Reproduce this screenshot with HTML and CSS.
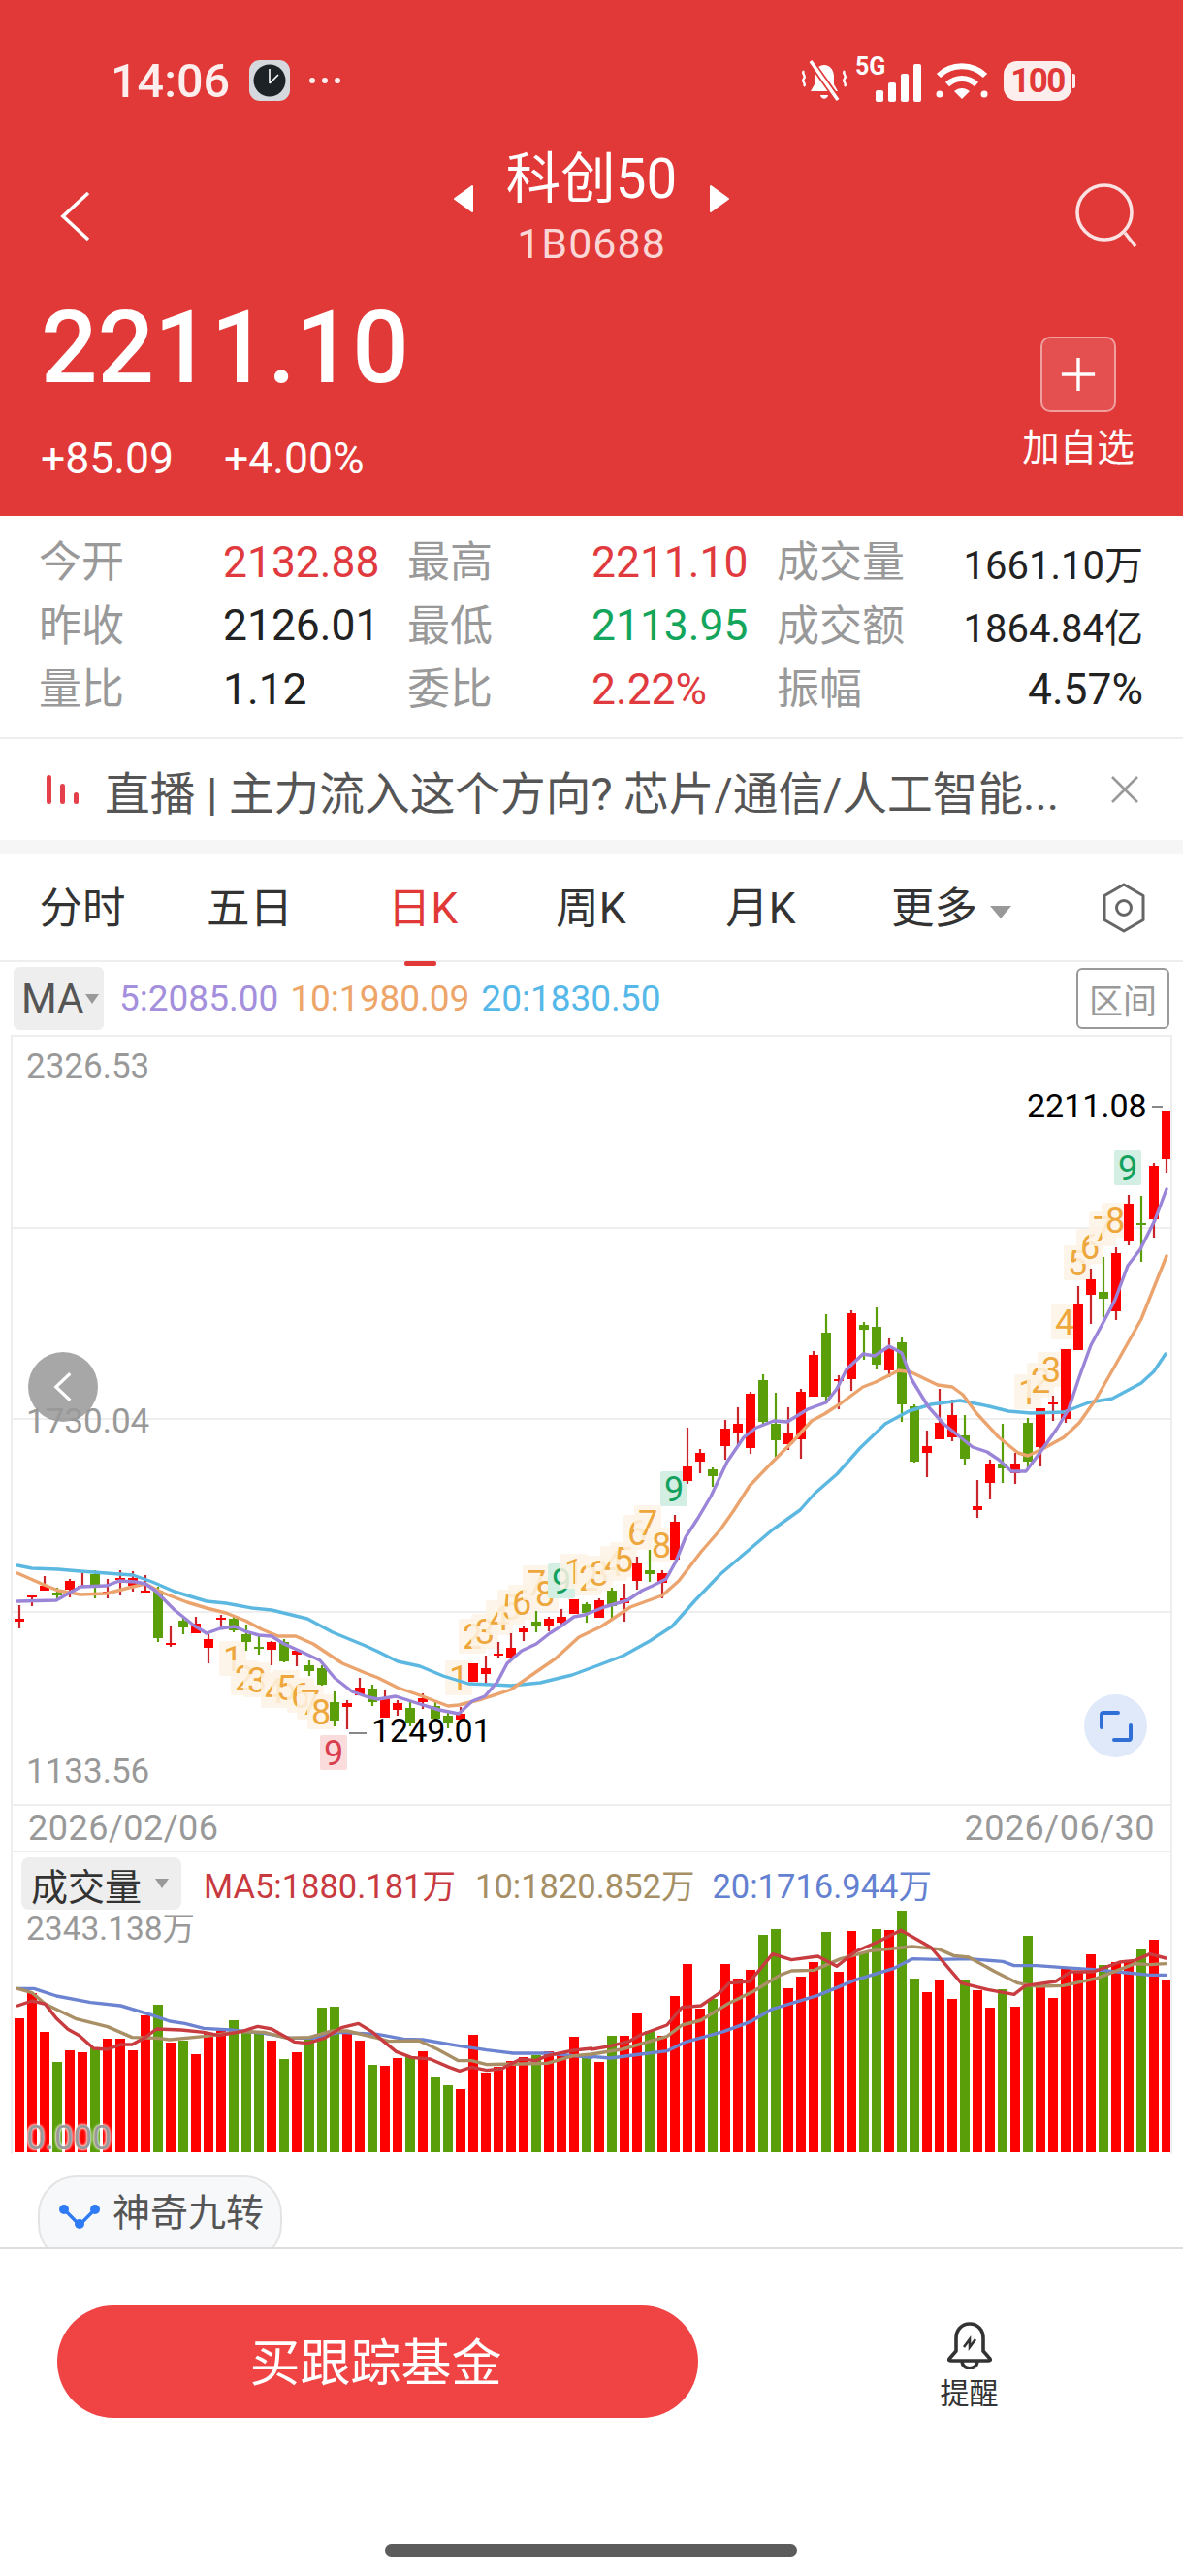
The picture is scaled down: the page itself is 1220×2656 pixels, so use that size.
FILE: index.html
```html
<!DOCTYPE html>
<html lang="zh">
<head>
<meta charset="utf-8">
<title>科创50</title>
<link rel="stylesheet" href="styles.css">
</head>
<body>
<div class="page">
  <header class="header">
    <div class="status">
      <span class="time">14:06</span>
      <svg class="clock" viewBox="0 0 42 42"><rect width="42" height="42" rx="11" fill="#d5d9dd"/><circle cx="21" cy="21" r="16.5" fill="#1d2226"/><path d="M21 24V9M21 24l9-9" stroke="#fff" stroke-width="1.6" fill="none"/></svg>
      <span class="dots"><i></i><i></i><i></i></span>
      <span class="status-right">
        <svg class="st-bell" viewBox="0 0 50 44"><path d="M25 6c6 0 10 5 10 12v8l4 7H11l4-7v-8c0-7 4-12 10-12z" fill="#fff"/><path d="M21 37c1 5 7 5 8 0z" fill="#fff"/><path d="M10 1l30 42" stroke="#e13838" stroke-width="7"/><path d="M11 2l28 40" stroke="#fff" stroke-width="3.5"/><path d="M4 12c-3 3 3 5 0 8s3 5 0 8M46 12c-3 3 3 5 0 8s3 5 0 8" stroke="#fff" stroke-width="2.4" fill="none"/></svg>
        <span class="st-signal"><b class="fiveg">5G</b>
          <svg viewBox="0 0 48 39"><rect x="0" y="27" width="8" height="12" rx="2" fill="#fff"/><rect x="13" y="19" width="8" height="20" rx="2" fill="#fff"/><rect x="26" y="10" width="8" height="29" rx="2" fill="#fff"/><rect x="39" y="0" width="8" height="39" rx="2" fill="#fff"/></svg>
        </span>
        <svg class="st-wifi" viewBox="0 0 54 39"><path d="M3 14C16 1 38 1 51 14" stroke="#fff" stroke-width="6" fill="none"/><path d="M12 23c9-8 21-8 30 0" stroke="#fff" stroke-width="6" fill="none"/><path d="M27 38l-8-8c5-4 11-4 16 0z" fill="#fff"/><circle cx="4" cy="33" r="3.500" fill="#fff"/><circle cx="50" cy="33" r="3.500" fill="#fff"/></svg>
        <span class="battery"><span class="battery-num">100</span></span>
      </span>
    </div>
    <nav class="nav">
      <svg class="back" viewBox="0 0 34 54"><path d="M30 3L4 27l26 24" fill="none" stroke="#fff" stroke-width="3.6"/></svg>
      <div class="title-wrap">
        <svg class="tri" viewBox="0 0 22 30"><path d="M20 2v26L2 15z" fill="#fff" stroke="#fff" stroke-width="2" stroke-linejoin="round"/></svg>
        <div class="title-text">
          <div class="title">科创50</div>
          <div class="code">1B0688</div>
        </div>
        <svg class="tri" viewBox="0 0 22 30"><path d="M2 2v26l18-13z" fill="#fff" stroke="#fff" stroke-width="2" stroke-linejoin="round"/></svg>
      </div>
      <svg class="search" viewBox="0 0 66 68"><circle cx="31" cy="31" r="28" fill="none" stroke="#fff" stroke-opacity=".85" stroke-width="3.6"/><path d="M52 52l11 14" stroke="#fff" stroke-opacity=".85" stroke-width="3.6"/></svg>
    </nav>
    <div class="quote">
      <div>
        <div class="price">2211.10</div>
        <div class="change"><span>+85.09</span><span>+4.00%</span></div>
      </div>
      <div class="add">
        <div class="add-btn"><svg viewBox="0 0 40 40"><path d="M20 2v36M2 20h36" stroke="#fff" stroke-width="3.6"/></svg></div>
        <div class="add-label">加自选</div>
      </div>
    </div>
  </header>

  <section class="stats">
    <span class="k">今开</span><span class="up">2132.88</span><span class="k">最高</span><span class="up">2211.10</span><span class="k">成交量</span><span class="v unit">1661.10万</span>
    <span class="k">昨收</span><span>2126.01</span><span class="k">最低</span><span class="down">2113.95</span><span class="k">成交额</span><span class="v unit">1864.84亿</span>
    <span class="k">量比</span><span>1.12</span><span class="k">委比</span><span class="up">2.22%</span><span class="k">振幅</span><span class="v">4.57%</span>
  </section>

  <section class="news">
    <svg class="news-icon" viewBox="0 0 34 30"><rect x="0" y="0" width="5" height="30" rx="2.5" fill="#e5404a"/><rect x="14" y="9" width="5" height="21" rx="2.5" fill="#e5404a"/><rect x="28" y="18" width="5" height="12" rx="2.5" fill="#e5404a"/></svg>
    <span class="news-text">直播 | 主力流入这个方向? 芯片/通信/人工智能...</span>
    <svg class="news-close" viewBox="0 0 30 28"><path d="M2 1l26 26M28 1L2 27" stroke="#999" stroke-width="2.6"/></svg>
  </section>

  <div class="gap"></div>

  <section class="tabs">
    <span class="tab">分时</span>
    <span class="tab">五日</span>
    <span class="tab active">日K</span>
    <span class="tab">周K</span>
    <span class="tab">月K</span>
    <span class="tab more">更多<i class="caret caret-lg"></i></span>
    <svg class="gear" viewBox="0 0 48 52"><path d="M24 2l20 11.500v25L24 50 4 38.500v-25z" fill="none" stroke="#666" stroke-width="3" stroke-linejoin="round"/><circle cx="24" cy="26" r="7.500" fill="none" stroke="#666" stroke-width="3"/></svg>
  </section>

  <section class="ma-row">
    <span class="ma-box">MA<i class="caret"></i></span>
    <span class="ma5">5:2085.00</span>
    <span class="ma10">10:1980.09</span>
    <span class="ma20">20:1830.50</span>
    <span class="range">区间</span>
  </section>

  <section class="kline">
    <svg id="kline" class="chart-svg" viewBox="13 1069 1194 789"></svg>
    <span class="axis ax-top">2326.53</span>
    <span class="fold"><svg viewBox="0 0 24 36"><path d="M20 3L4 18l16 15" fill="none" stroke="#fff" stroke-width="3.4"/></svg></span>
    <span class="axis ax-mid">1730.04</span>
    <span class="axis ax-low">1133.56</span>
    <span class="peak peak-high">2211.08</span><i class="tick tick-high"></i>
    <span class="peak peak-low">1249.01</span><i class="tick tick-low"></i>
    <span class="expand"><svg viewBox="0 0 36 32"><path d="M3 17V4q0-2 2-2h15M33 15v13q0 2-2 2H16" fill="none" stroke="#2f6fd6" stroke-width="4" stroke-linecap="round"/></svg></span>
  </section>

  <section class="dates"><span>2026/02/06</span><span>2026/06/30</span></section>

  <section class="volume">
    <svg id="volume" class="vol-svg" viewBox="13 1912 1194 309"></svg>
    <div class="vol-head">
      <span class="vol-box">成交量<i class="caret"></i></span>
      <span class="vma5">MA5:1880.181万</span>
      <span class="vma10">10:1820.852万</span>
      <span class="vma20">20:1716.944万</span>
    </div>
    <span class="axis ax-vol">2343.138万</span>
    <span class="axis ax-zero">0.000</span>
  </section>

  <section class="chips">
    <span class="chip">
      <svg viewBox="0 0 42 26"><path d="M5 6l16 16L37 6" fill="none" stroke="#2f7bf5" stroke-width="3.4"/><circle cx="5" cy="6" r="5" fill="#2f7bf5"/><circle cx="37" cy="6" r="5" fill="#2f7bf5"/><circle cx="21" cy="21" r="5" fill="#2f7bf5"/></svg>
      神奇九转
    </span>
  </section>

  <footer class="footer">
    <div class="actions">
      <div class="buy">买跟踪基金</div>
      <div class="remind">
        <svg viewBox="0 0 50 50"><path d="M25 3c-9 0-14 7-14 15v13l-7 8q-1 2 2 2h38q3 0 2-2l-7-8V18c0-8-5-15-14-15z" fill="none" stroke="#333" stroke-width="3.6" stroke-linejoin="round"/><path d="M17 42c1 9 15 9 16 0" fill="none" stroke="#333" stroke-width="3.6"/><path d="M19 27l6-8v8l6-8" fill="none" stroke="#333" stroke-width="2.6"/></svg>
        <span>提醒</span>
      </div>
    </div>
    <div class="home"></div>
  </footer>
</div>
<script src="chart.js"></script>
</body>
</html>
```
FILE: styles.css
```css
* { box-sizing: border-box; }
html, body { margin: 0; padding: 0; background: #fff; }
body { font-family: Roboto, "Noto Sans CJK SC", sans-serif; color: #222; }
i { display: inline-block; font-style: normal; }
.page { width: 1220px; height: 2656px; overflow: hidden; display: flex; flex-direction: column; }

/* header */
.header { height: 532px; background: #e13838; color: #fff; flex: none; }
.status { height: 166px; padding: 0 111px 0 114px; display: flex; align-items: center; }
.time { font-size: 48.500px; font-weight: 500; color: #fdeeee; }
.clock { width: 42px; height: 42px; margin-left: 20px; }
.dots { display: flex; gap: 7px; margin-left: 20px; }
.dots i { width: 6px; height: 6px; border-radius: 50%; background: #fdeeee; }
.status-right { margin-left: auto; display: flex; align-items: center; }
.st-bell { width: 50px; height: 44px; }
.st-signal { position: relative; width: 66px; height: 44px; margin-left: 10px; display: block; }
.st-signal svg { position: absolute; left: 18px; top: 5px; width: 48px; height: 39px; }
.fiveg { position: absolute; left: -3px; top: -7px; font-size: 25px; font-weight: 700; color: #fff; }
.st-wifi { width: 54px; height: 39px; margin-left: 14px; }
.battery { width: 70px; height: 41px; margin-left: 16px; margin-right: 4px; border-radius: 14px; background: #fdeeee; display: flex; align-items: center; justify-content: center; position: relative; }
.battery::after { content: ""; position: absolute; right: -4px; top: 13px; width: 3px; height: 15px; border-radius: 0 2px 2px 0; background: #fdeeee; }
.battery-num { font-size: 35px; font-weight: 700; color: #e13838; letter-spacing: -1.500px; }
.nav { height: 124px; position: relative; display: flex; justify-content: center; padding-left: 0; }
.back { position: absolute; left: 61px; top: 30px; width: 34px; height: 54px; }
.search { position: absolute; left: 1108px; top: 22px; width: 66px; height: 68px; }
.title-wrap { display: flex; align-items: flex-start; }
.tri { width: 22px; height: 30px; margin-top: 24px; }
.title-text { width: 242px; text-align: center; }
.title { font-size: 56.500px; line-height: 60px; margin-top: -11px; }
.code { font-size: 43px; line-height: 50px; margin-top: 11px; color: #fbd6d6; letter-spacing: 1px; }
.quote { height: 242px; padding: 0 50px 0 42px; display: flex; justify-content: space-between; }
.price { font-size: 103px; font-weight: 500; line-height: 110px; margin-top: 14px; }
.change { display: flex; gap: 52px; font-size: 44.500px; line-height: 50px; margin-top: 34px; }
.add { width: 116px; margin-top: 57px; text-align: center; }
.add-btn { width: 78px; height: 78px; margin: 0 auto; border-radius: 10px; background: rgba(255,255,255,.12); border: 2px solid rgba(255,255,255,.45); display: flex; align-items: center; justify-content: center; }
.add-btn svg { width: 38px; height: 38px; }
.add-label { font-size: 38.500px; line-height: 46px; margin-top: 14px; }

/* stats */
.stats { flex: none; height: 230px; padding: 15px 41px 0 40px; border-bottom: 2px solid #eeeeee; display: grid; grid-template-columns: 190px 190px 190px 191px 1fr auto; grid-auto-rows: 65.500px; align-items: center; font-size: 44.400px; }
.stats .k { color: #999; font-size: 44px; margin-top: -7px; }
.stats .up { color: #e03a3e; }
.stats .down { color: #14a55c; }
.stats .v { text-align: right; }
.stats .unit { font-size: 40px; }

/* news */
.news { flex: none; height: 104px; padding: 0 45px 0 48px; display: flex; align-items: center; }
.news-icon { width: 34px; height: 30px; }
.news-text { margin-left: 26px; font-size: 46.700px; color: #555; white-space: nowrap; }
.news-close { width: 30px; height: 28px; margin-left: auto; }
.gap { flex: none; height: 15px; background: #f6f6f6; }

/* tabs */
.tabs { flex: none; height: 111px; padding-bottom: 6px; border-bottom: 2px solid #eeeeee; display: grid; grid-template-columns: 170px 175px 182px 165px 185px 1fr auto; align-items: center; font-size: 44.500px; color: #333; padding-right: 37px; position: relative; }
.tab { text-align: center; position: relative; }
.tab.active { color: #e13838; }
.tab.active::after { content: ""; position: absolute; left: 72px; width: 33px; height: 5px; bottom: -31px; border-radius: 2px; background: #e13838; }
.tab.more { text-align: left; padding-left: 42px; }
.caret { width: 0; height: 0; border-left: 7px solid transparent; border-right: 7px solid transparent; border-top: 10px solid #999; vertical-align: middle; margin-left: 5px; }
.caret-lg { border-left-width: 11px; border-right-width: 11px; border-top-width: 13px; margin-left: 13px; }
.gear { width: 48px; height: 52px; margin-top: 6px; }

/* MA row */
.ma-row { flex: none; height: 75px; position: relative; display: flex; align-items: center; padding-left: 14px; font-size: 37px; }
.ma-box { width: 93px; height: 65px; border-radius: 6px; background: #eee; color: #555; font-size: 42px; display: flex; align-items: center; padding-left: 8px; }
.ma-box .caret { margin-left: 2px; }
.ma5 { color: #a48fdc; margin-left: 16px; }
.ma10 { color: #eda56a; margin-left: 12px; }
.ma20 { color: #55b8e8; margin-left: 12px; }
.range { margin-left: auto; margin-right: 14px; width: 96px; height: 63px; border: 2px solid #999; border-radius: 6px; color: #999; font-size: 35px; display: flex; align-items: center; justify-content: center; }

/* k-line */
.kline { flex: none; height: 793px; margin: 0 11px; border: 2px solid #eeeeee; border-bottom: 0; position: relative; }
.chart-svg { display: block; width: 1194px; height: 789px; position: absolute; left: 0; top: 0; }
.axis { position: absolute; left: 14px; font-size: 35px; line-height: 34px; color: #999; }
.ax-top { top: 14px; }
.ax-mid { top: 380px; }
.ax-low { top: 741px; }
.fold { position: absolute; left: 16px; top: 325px; width: 72px; height: 72px; border-radius: 50%; background: rgba(130,130,130,.7); display: flex; align-items: center; justify-content: center; }
.fold svg { width: 22px; height: 34px; }
.peak { position: absolute; font-size: 34px; line-height: 34px; color: #000; }
.peak-high { left: 1046px; top: 54px; }
.peak-low { left: 370px; top: 698px; }
.tick { position: absolute; height: 2px; background: #888; }
.tick-high { left: 1175px; top: 71px; width: 11px; }
.tick-low { left: 347px; top: 717px; width: 18px; }
.expand { position: absolute; left: 1105px; top: 678px; width: 65px; height: 65px; border-radius: 50%; background: #dfe9fa; display: flex; align-items: center; justify-content: center; }
.expand svg { width: 36px; height: 32px; }

.dates { flex: none; height: 50px; margin: 0 11px; padding: 0 16px 0 16px; border: 2px solid #eeeeee; display: flex; align-items: center; justify-content: space-between; font-size: 36px; color: #999; letter-spacing: .5px; }

/* volume */
.volume { flex: none; height: 311px; margin: 0 11px; border-left: 2px solid #eeeeee; border-right: 2px solid #eeeeee; position: relative; }
.vol-svg { display: block; width: 1194px; height: 309px; position: absolute; left: 0; top: 0; }
.vol-head { position: absolute; left: 9px; top: 5px; height: 54px; display: flex; align-items: center; font-size: 34.500px; }
.vol-box { width: 165px; height: 54px; border-radius: 8px; background: #eee; color: #333; font-size: 38px; padding-left: 10px; display: flex; align-items: center; }
.vol-box .caret { margin-left: 14px; }
.vma5 { color: #c83a40; margin-left: 23px; }
.vma10 { color: #a68f64; margin-left: 20px; }
.vma20 { color: #6480d0; margin-left: 18px; }
.ax-vol { top: 62px; font-size: 33.500px; }
.ax-zero { top: 278px; text-shadow: 0 0 3px #fff, 0 0 3px #fff; }

/* chip */
.chips { flex: none; height: 96px; overflow: hidden; padding: 22px 0 0 39px; }
.chip { width: 252px; height: 90px; border: 2px solid #e4e4e4; border-radius: 40px; background: #f7f8fa; display: flex; align-items: center; gap: 13px; padding: 0 0 21px 20px; font-size: 39px; color: #555; }
.chip svg { width: 42px; height: 26px; margin-top: 14px; }

/* footer */
.footer { flex: 1; border-top: 2px solid #dddddd; background: #fff; display: flex; flex-direction: column; }
.actions { height: 304px; padding: 58px 0 0 59px; display: flex; }
.buy { width: 661px; height: 116px; padding-bottom: 5px; padding-right: 4px; border-radius: 58px; background: #f04444; color: #fff; font-size: 52px; display: flex; align-items: center; justify-content: center; }
.remind { margin-left: 249px; width: 61px; margin-top: 16px; display: flex; flex-direction: column; align-items: center; }
.remind svg { width: 50px; height: 50px; }
.remind span { font-size: 30px; line-height: 36px; margin-top: 7px; color: #333; }
.home { width: 425px; height: 13px; border-radius: 7px; margin-left: 397px; background: #5c5c5c; }

/* chart marks */
.w-r { stroke: #c9252b; stroke-width: 2.200; }
.w-g { stroke: #5a9e0a; stroke-width: 2.200; }
.b-r { fill: #ff0000; }
.b-g { fill: #5a9e0a; }
.grid { stroke: #eeeeee; stroke-width: 2; }
.line { fill: none; stroke-width: 3.400; stroke-linejoin: round; stroke-linecap: round; }
.l-ma5 { stroke: #9b85d8; }
.l-ma10 { stroke: #eba46e; }
.l-ma20 { stroke: #5cb8e0; }
.l-v5 { stroke: #c83c40; }
.l-v10 { stroke: #a98f65; }
.l-v20 { stroke: #6b83d0; }
.m-box { fill: #fdf3e6; fill-opacity: .85; }
.m-num { fill: #eea73c; font-size: 36px; text-anchor: middle; font-family: Roboto, sans-serif; }
.m-box-g { fill: #d3eee2; }
.m-num-g { fill: #12a15e; font-size: 36px; text-anchor: middle; font-family: Roboto, sans-serif; }
.m-box-p { fill: #fbdcdc; }
.m-num-p { fill: #d9404f; font-size: 36px; text-anchor: middle; font-family: Roboto, sans-serif; }
```
FILE: chart.js
```js
var NS = 'http://www.w3.org/2000/svg';
function el(parent, name, attrs, text) {
  var n = document.createElementNS(NS, name);
  for (var k in attrs) n.setAttribute(k, attrs[k]);
  if (text !== undefined) n.textContent = text;
  parent.appendChild(n);
  return n;
}
function xAt(i) { return 7 + 13 * i; }

/* high, body top, body bottom, low, colour */
var candles = [
[1655,1669,1672,1679,'r'],[1645,1645,1647,1656,'r'],[1625,1635,1640,1640,'r'],[1637,1642,1645,1648,'g'],[1628,1630,1639,1647,'r'],
[1622,1635,1637,1637,'r'],[1619,1623,1635,1648,'g'],[1628,1641,1643,1648,'r'],[1619,1627,1629,1645,'r'],[1620,1627,1635,1641,'r'],
[1624,1640,1642,1642,'r'],[1636,1640,1689,1693,'g'],[1677,1694,1696,1698,'r'],[1667,1671,1678,1685,'g'],[1667,1674,1684,1684,'r'],
[1685,1690,1699,1715,'r'],[1665,1668,1669,1679,'r'],[1666,1669,1681,1683,'g'],[1675,1685,1693,1702,'g'],[1687,1698,1699,1706,'g'],
[1692,1693,1701,1717,'r'],[1690,1693,1713,1714,'g'],[1701,1702,1706,1718,'r'],[1712,1717,1723,1728,'g'],[1717,1720,1737,1738,'g'],
[1744,1755,1774,1780,'g'],[1753,1756,1760,1783,'r'],[1730,1740,1748,1748,'r'],[1737,1741,1755,1759,'g'],[1743,1752,1771,1771,'r'],
[1753,1756,1763,1769,'r'],[1755,1761,1777,1780,'g'],[1746,1751,1755,1762,'r'],[1753,1759,1772,1773,'g'],[1764,1769,1777,1782,'g'],
[1760,1767,1773,1773,'r'],[1715,1715,1734,1734,'r'],[1707,1720,1726,1737,'r'],[1693,1705,1707,1709,'r'],[1684,1699,1709,1709,'r'],
[1676,1679,1683,1692,'r'],[1661,1672,1677,1683,'g'],[1667,1669,1677,1682,'r'],[1659,1667,1673,1677,'r'],[1649,1649,1664,1664,'r'],
[1652,1654,1663,1673,'g'],[1648,1650,1668,1668,'r'],[1637,1640,1656,1669,'g'],[1633,1648,1653,1672,'r'],[1605,1612,1630,1639,'r'],
[1598,1619,1623,1631,'g'],[1619,1622,1632,1648,'r'],[1562,1569,1608,1608,'r'],[1472,1512,1527,1530,'r'],[1494,1498,1507,1519,'r'],
[1513,1515,1522,1533,'g'],[1464,1473,1491,1505,'r'],[1451,1468,1477,1490,'r'],[1435,1437,1493,1499,'r'],[1417,1423,1466,1469,'g'],
[1436,1468,1485,1502,'g'],[1451,1478,1489,1495,'r'],[1432,1435,1484,1504,'r'],[1393,1397,1440,1440,'r'],[1355,1374,1440,1444,'g'],
[1418,1422,1423,1453,'r'],[1351,1354,1422,1434,'r'],[1363,1366,1371,1402,'g'],[1348,1368,1407,1412,'g'],[1380,1391,1413,1420,'r'],
[1379,1384,1448,1466,'g'],[1448,1450,1507,1508,'g'],[1475,1491,1498,1523,'r'],[1432,1467,1484,1484,'r'],[1443,1459,1482,1486,'r'],
[1459,1480,1504,1511,'g'],[1526,1553,1557,1565,'r'],[1505,1509,1529,1546,'r'],[1468,1509,1514,1529,'g'],[1498,1509,1519,1530,'r'],
[1462,1467,1507,1513,'g'],[1452,1452,1492,1512,'r'],[1439,1446,1448,1465,'r'],[1391,1391,1463,1467,'r'],[1326,1344,1392,1392,'r'],
[1308,1319,1335,1365,'r'],[1296,1332,1339,1358,'g'],[1286,1292,1352,1361,'r'],[1232,1241,1280,1284,'r'],[1233,1261,1262,1301,'g'],
[1199,1202,1257,1276,'r'],[1145,1145,1195,1209,'r']
];

var ma5 = [[18,1651],[58,1650],[83,1636],[110,1635],[123,1630],[140,1631],[150,1633],[160,1640],[180,1660],[200,1676],[213,1684],[227,1679],[242,1677],[253,1682],[267,1686],[280,1687],[293,1695],[313,1704],[330,1712],[345,1730],[363,1744],[380,1750],[390,1752],[408,1749],[433,1757],[453,1763],[473,1767],[487,1754],[500,1749],[513,1734],[523,1715],[538,1702],[553,1695],[567,1684],[578,1677],[592,1667],[603,1665],[623,1657],[647,1650],[662,1640],[673,1635],[687,1628],[697,1610],[707,1585],[720,1565],[733,1543],[750,1507],[767,1482],[780,1472],[798,1465],[812,1466],[833,1453],[852,1446],[863,1432],[873,1412],[890,1396],[902,1398],[917,1388],[930,1395],[940,1422],[957,1450],[973,1468],[1003,1492],[1018,1497],[1030,1505],[1043,1517],[1058,1517],[1073,1497],[1090,1473],[1102,1453],[1113,1420],[1125,1387],[1138,1363],[1150,1340],[1163,1305],[1176,1288],[1191,1258],[1203,1226]];
var ma10 = [[18,1622],[43,1633],[60,1640],[83,1644],[110,1643],[133,1637],[150,1633],[167,1642],[193,1652],[213,1658],[233,1663],[253,1671],[270,1680],[287,1687],[305,1687],[323,1695],[353,1715],[377,1725],[390,1730],[410,1740],[433,1748],[462,1759],[473,1758],[497,1752],[527,1742],[547,1728],[573,1710],[597,1688],[620,1677],[650,1657],[683,1645],[700,1630],[723,1600],[743,1577],[757,1557],[773,1532],[797,1507],[817,1487],[837,1465],[850,1458],[867,1447],[890,1430],[903,1425],[927,1413],[940,1415],[967,1428],[982,1430],[993,1438],[1007,1457],[1030,1482],[1050,1498],[1060,1501],[1077,1493],[1097,1482],[1113,1467],[1130,1443],[1150,1408],[1177,1360],[1185,1340],[1203,1295]];
var ma20 = [[18,1614],[33,1617],[60,1618],[83,1620],[110,1622],[137,1624],[157,1631],[180,1641],[213,1651],[233,1653],[260,1658],[280,1660],[317,1669],[343,1683],[377,1697],[390,1703],[410,1713],[433,1718],[457,1728],[483,1736],[507,1737],[527,1738],[557,1735],[590,1727],[617,1717],[643,1707],[670,1692],[693,1677],[717,1650],[743,1623],[770,1600],[797,1577],[825,1557],[840,1540],[863,1520],[887,1493],[913,1468],[937,1455],[960,1448],[990,1444],[1020,1450],[1040,1455],[1063,1457],[1097,1456],[1123,1446],[1147,1442],[1177,1426],[1190,1414],[1202,1396]];

/* digit, x, y centre, kind */
var marks = [
[1,240,1710],[2,252,1730],[3,265,1732],[4,283,1743],[5,295,1740],[6,310,1748],[7,320,1755],[8,331,1765],[9,344,1807,'p'],
[1,473,1730],[2,487,1687],[3,500,1682],[4,515,1668],[5,527,1657],[6,538,1652],[7,553,1632],[8,562,1643],[9,579,1630,'g'],
[1,592,1620],[2,607,1627],[3,618,1622],[4,633,1612],[5,643,1608],[6,657,1580],[7,668,1570],[8,682,1593],[9,695,1535,'g'],
[1,1060,1435],[2,1073,1423],[3,1084,1412],[4,1098,1363],[5,1111,1302],[6,1124,1285],[7,1137,1267],[8,1150,1258],[9,1163,1204,'g']
];

var k = document.getElementById('kline');
[1266, 1463, 1662].forEach(function (y) {
  el(k, 'line', { x1: 13, x2: 1207, y1: y, y2: y, 'class': 'grid' });
});
marks.forEach(function (m) {
  var kind = m[3] ? '-' + m[3] : '';
  el(k, 'rect', { x: m[1] - 14, y: m[2] - 18, width: 28, height: 36, rx: 2, 'class': 'm-box' + kind });
  el(k, 'text', { x: m[1], y: m[2] + 13, 'class': 'm-num' + kind }, m[0]);
});
candles.forEach(function (c, i) {
  var x = xAt(i + 1), t = c[4];
  el(k, 'line', { x1: x, x2: x, y1: c[0], y2: c[3], 'class': 'w-' + t });
  el(k, 'rect', { x: x - 5, y: c[1], width: 10, height: Math.max(c[2] - c[1], 2), 'class': 'b-' + t });
});
function poly(svg, pts, cls) {
  el(svg, 'polyline', { points: pts.map(function (p) { return p.join(','); }).join(' '), 'class': 'line ' + cls });
}
poly(k, ma20, 'l-ma20');
poly(k, ma10, 'l-ma10');
poly(k, ma5, 'l-ma5');

/* volume bars: top y, colour */
var bars = [
[2083,'r'],[2057,'r'],[2097,'r'],[2128,'g'],[2116,'r'],[2118,'r'],[2113,'g'],[2104,'r'],[2104,'r'],[2116,'r'],
[2080,'r'],[2069,'g'],[2108,'r'],[2106,'g'],[2120,'r'],[2099,'r'],[2096,'r'],[2085,'g'],[2096,'g'],[2096,'g'],
[2106,'r'],[2125,'g'],[2118,'r'],[2105,'g'],[2072,'g'],[2071,'g'],[2098,'r'],[2106,'r'],[2131,'g'],[2132,'r'],
[2124,'r'],[2122,'g'],[2117,'r'],[2143,'g'],[2152,'g'],[2156,'r'],[2100,'r'],[2139,'r'],[2133,'r'],[2127,'r'],
[2123,'r'],[2121,'g'],[2117,'r'],[2118,'r'],[2102,'r'],[2123,'g'],[2128,'r'],[2101,'g'],[2101,'r'],[2078,'r'],
[2096,'g'],[2101,'r'],[2060,'r'],[2027,'r'],[2073,'r'],[2063,'g'],[2027,'r'],[2042,'r'],[2033,'r'],[1997,'g'],
[1991,'g'],[2052,'r'],[2040,'r'],[2025,'r'],[1994,'g'],[2035,'r'],[1993,'r'],[2015,'g'],[1991,'g'],[1992,'r'],
[1972,'g'],[2042,'g'],[2056,'r'],[2043,'r'],[2063,'r'],[2043,'g'],[2054,'r'],[2072,'r'],[2053,'g'],[2071,'r'],
[1998,'g'],[2050,'r'],[2062,'r'],[2032,'r'],[2035,'r'],[2017,'r'],[2028,'g'],[2025,'r'],[2025,'r'],[2012,'g'],
[2002,'r'],[2044,'r']
];
/* line points are read from two half-width measurements */
function scaleL(a) { return a.map(function (p) { return [p[0] / 2.57, p[1] / 3 + 1860]; }); }
function scaleR(a) { return a.map(function (p) { return [p[0] / 2.57 + 610, p[1] / 3 + 1860]; }); }
var v5 = scaleL([[47,630],[85,615],[120,625],[150,670],[180,703],[210,722],[248,762],[285,765],[320,750],[350,750],[385,728],[415,702],[480,705],[540,712],[580,722],[640,710],[683,694],[720,702],[780,742],[815,746],[860,730],[905,698],[950,685],[985,710],[1050,772],[1090,790],[1140,795],[1190,820],[1218,832],[1250,820],[1290,830],[1330,825],[1380,795],[1420,800],[1450,785],[1520,768],[1568,762]]).concat(scaleR([[0,765],[50,755],[100,740],[130,720],[200,690],[240,635],[290,630],[340,590],[365,560],[420,555],[480,470],[530,488],[600,477],[650,508],[700,462],[760,432],[820,397],[900,450],[980,560],[1050,580],[1120,595],[1150,568],[1230,555],[1270,525],[1330,525],[1400,495],[1440,490],[1480,470],[1522,483]]));
var v10 = scaleL([[47,577],[85,590],[120,625],[200,670],[285,695],[350,728],[415,730],[450,735],[540,725],[640,710],[700,712],[760,730],[820,728],[880,708],[920,708],[1000,730],[1030,740],[1110,738],[1160,765],[1215,800],[1250,800],[1290,812],[1380,810],[1450,808],[1520,785],[1568,780]]).concat(scaleR([[0,780],[80,765],[200,725],[240,690],[290,675],[360,625],[430,585],[500,535],[530,522],[590,520],[660,485],[740,460],[850,447],[920,455],[960,475],[1000,480],[1070,525],[1130,560],[1180,570],[1250,568],[1340,545],[1440,500],[1480,503],[1522,500]]));
var v20 = scaleL([[47,577],[90,577],[150,600],[240,620],[320,630],[400,658],[450,678],[490,685],[540,700],[610,705],[700,715],[770,730],[830,730],[900,712],[1000,718],[1070,733],[1120,735],[1220,755],[1290,767],[1360,777],[1450,777],[1520,785],[1568,790]]).concat(scaleR([[0,787],[50,792],[130,780],[200,770],[250,742],[350,710],[420,680],[480,640],[600,598],[700,550],[800,515],[850,485],[920,487],[1000,485],[1090,493],[1120,506],[1180,506],[1250,512],[1330,518],[1420,528],[1480,535],[1522,535]]));

var v = document.getElementById('volume');
bars.forEach(function (b, i) {
  el(v, 'rect', { x: xAt(i + 1) - 5, y: b[0], width: 10, height: 2221 - b[0], 'class': 'b-' + b[1] });
});
poly(v, v20, 'l-v20');
poly(v, v10, 'l-v10');
poly(v, v5, 'l-v5');
```
